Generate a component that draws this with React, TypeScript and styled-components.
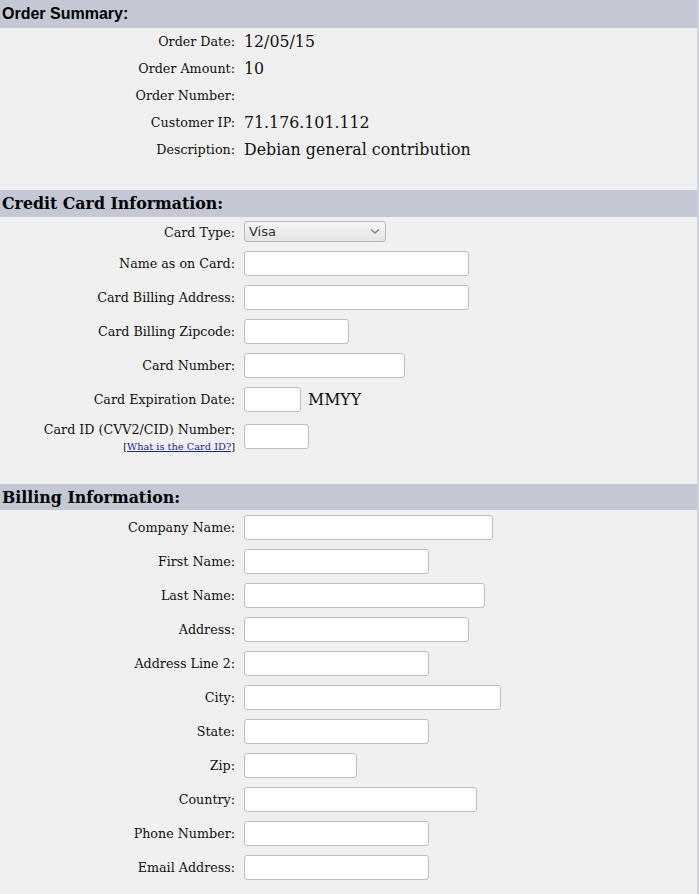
import React from "react";
import styled, { createGlobalStyle } from "styled-components";

const GlobalStyle = createGlobalStyle`
  html, body { margin: 0; padding: 0; background: #f0f0f0; }
  * { box-sizing: border-box; }
`;

const Page = styled.div`
  width: 699px;
  min-height: 894px;
  background: #f0f0f0;
  border-right: 2px solid #cdd1e0;
  font-family: "DejaVu Serif", serif;
  color: #111;
`;

const Section = styled.section<{ $after: number }>`
  display: flex;
  flex-direction: column;
  padding-bottom: ${(p) => p.$after}px;
`;

const SectionTitle = styled.h2<{ $sans?: boolean; $h: number }>`
  margin: 0;
  height: ${(p) => p.$h}px;
  display: flex;
  align-items: center;
  padding-left: 2px;
  background: #c4c8d5;
  font-family: ${(p) => (p.$sans ? '"Liberation Sans", Arial, sans-serif' : '"DejaVu Serif", serif')};
  font-size: ${(p) => (p.$sans ? 16 : 15.8)}px;
  font-weight: bold;
  color: #000;
`;

const Row = styled.div<{ $h: number }>`
  display: grid;
  grid-template-columns: 235px 1fr;
  column-gap: 9px;
  align-items: center;
  height: ${(p) => p.$h}px;
`;

const Label = styled.div`
  text-align: right;
  font-size: 12.7px;
  line-height: 16px;
  color: #111;
  white-space: nowrap;
`;

const FieldLabel = styled(Label)`
  padding-top: 2px;
`;

const LabelStack = styled.div`
  display: flex;
  flex-direction: column;
  align-items: flex-end;
  gap: 2px;
  padding-top: 3px;
`;

const HelpLine = styled.span`
  font-size: 9.8px;
  line-height: 13px;
  color: #111;
`;

const HelpLink = styled.a`
  color: #23239a;
  text-decoration: underline;
`;

const Value = styled.div`
  font-size: 15.8px;
  line-height: 20px;
  color: #111;
  white-space: nowrap;
`;

const Control = styled.div`
  display: flex;
  align-items: center;
  gap: 7px;
`;

const TextInput = styled.input<{ $w: number }>`
  width: ${(p) => p.$w}px;
  height: 25px;
  margin: 0;
  padding: 2px 4px;
  border: 1px solid #bdbdbd;
  border-radius: 3px;
  background: #fff;
  font-family: "DejaVu Sans", sans-serif;
  font-size: 13px;
`;

const SelectWrap = styled.div`
  position: relative;
  width: 142px;
  height: 21px;
`;

const Select = styled.select`
  appearance: none;
  -webkit-appearance: none;
  width: 100%;
  height: 100%;
  margin: 0;
  padding: 0 20px 0 4px;
  border: 1px solid #b8b8b8;
  border-radius: 3px;
  background: linear-gradient(#f6f6f6, #e4e4e4);
  font-family: "DejaVu Sans", sans-serif;
  font-size: 13px;
  color: #333;
`;

const Chevron = styled.svg`
  position: absolute;
  right: 6px;
  top: 7px;
  pointer-events: none;
`;

const Suffix = styled.span`
  font-size: 15.8px;
  color: #111;
  padding-top: 1px;
`;

const summary: [string, string][] = [
  ["Order Date:", "12/05/15"],
  ["Order Amount:", "10"],
  ["Order Number:", ""],
  ["Customer IP:", "71.176.101.112"],
  ["Description:", "Debian general contribution"],
];

const billing: [string, number][] = [
  ["Company Name:", 249],
  ["First Name:", 185],
  ["Last Name:", 241],
  ["Address:", 225],
  ["Address Line 2:", 185],
  ["City:", 257],
  ["State:", 185],
  ["Zip:", 113],
  ["Country:", 233],
  ["Phone Number:", 185],
  ["Email Address:", 185],
];

export default function App() {
  return (
    <>
      <GlobalStyle />
      <Page>
        <Section $after={27}>
          <SectionTitle $sans $h={28}>Order Summary:</SectionTitle>
          {summary.map(([l, v]) => (
            <Row key={l} $h={27}>
              <Label>{l}</Label>
              <Value>{v}</Value>
            </Row>
          ))}
        </Section>

        <Section $after={28}>
          <SectionTitle $h={27}>Credit Card Information:</SectionTitle>
          <Row $h={29}>
            <FieldLabel>Card Type:</FieldLabel>
            <Control>
              <SelectWrap>
                <Select defaultValue="Visa">
                  <option>Visa</option>
                  <option>MasterCard</option>
                  <option>American Express</option>
                  <option>Discover</option>
                </Select>
                <Chevron width="10" height="7" viewBox="0 0 10 7">
                  <path d="M1 1.5 L5 5 L9 1.5" fill="none" stroke="#888" strokeWidth="1.6" />
                </Chevron>
              </SelectWrap>
            </Control>
          </Row>
          <Row $h={34}>
            <FieldLabel>Name as on Card:</FieldLabel>
            <Control><TextInput $w={225} /></Control>
          </Row>
          <Row $h={34}>
            <FieldLabel>Card Billing Address:</FieldLabel>
            <Control><TextInput $w={225} /></Control>
          </Row>
          <Row $h={34}>
            <FieldLabel>Card Billing Zipcode:</FieldLabel>
            <Control><TextInput $w={105} /></Control>
          </Row>
          <Row $h={34}>
            <FieldLabel>Card Number:</FieldLabel>
            <Control><TextInput $w={161} /></Control>
          </Row>
          <Row $h={34}>
            <FieldLabel>Card Expiration Date:</FieldLabel>
            <Control>
              <TextInput $w={57} />
              <Suffix>MMYY</Suffix>
            </Control>
          </Row>
          <Row $h={40}>
            <LabelStack>
              <Label>Card ID (CVV2/CID) Number:</Label>
              <HelpLine>
                [<HelpLink href="#">What is the Card ID?</HelpLink>]
              </HelpLine>
            </LabelStack>
            <Control><TextInput $w={65} /></Control>
          </Row>
        </Section>

        <Section $after={9}>
          <SectionTitle $h={26}>Billing Information:</SectionTitle>
          {billing.map(([l, w]) => (
            <Row key={l} $h={34}>
              <FieldLabel>{l}</FieldLabel>
              <Control><TextInput $w={w} /></Control>
            </Row>
          ))}
        </Section>
      </Page>
    </>
  );
}
